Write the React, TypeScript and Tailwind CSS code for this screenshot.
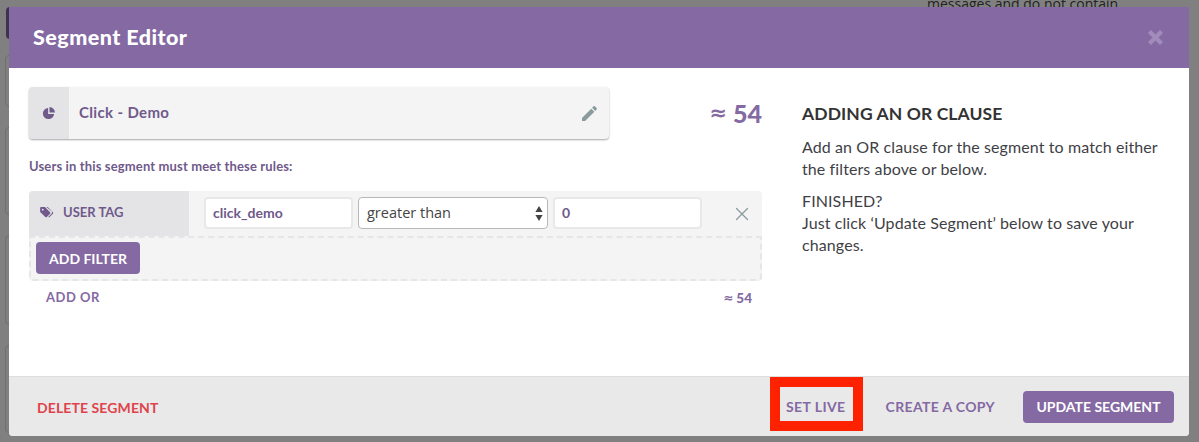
import { X } from "lucide-react";

function PieIcon() {
  return (
    <svg viewBox="0 0 16 16" className="h-[14px] w-[14px]" fill="#6f5a8b">
      <path d="M7 2.2A6.4 6.4 0 1 0 13.8 9H7z" />
      <path d="M8.6 1.2v6.2h6.2a6.2 6.2 0 0 0-6.2-6.2z" />
    </svg>
  );
}

function TagsIcon() {
  return (
    <svg viewBox="0 0 16 14" className="h-[12px] w-[14px]" fill="#6f5a8b">
      <path d="M0 1.4C0 .6.6 0 1.4 0h4.2l6 6c.5.5.5 1.3 0 1.8l-3.8 3.9c-.5.5-1.3.5-1.8 0l-6-6zM3 2a1.1 1.1 0 1 0 0 2.2A1.1 1.1 0 0 0 3 2z" />
      <path d="M7.4 0h1.5l6 6c.5.5.5 1.3 0 1.8l-3.8 3.9c-.5.5-1.2.5-1.7.1l3.9-4c.8-.8.8-1.9 0-2.7z" />
    </svg>
  );
}

function PencilIcon() {
  return (
    <svg viewBox="3 3 18 18" className="mr-[12px] h-[15px] w-[15px]" fill="#8b9a9c">
      <path d="M3 17.25V21h3.75L17.81 9.94l-3.75-3.75L3 17.25zM20.71 7.04c.39-.39.39-1.02 0-1.41l-2.34-2.34c-.39-.39-1.02-.39-1.41 0l-1.83 1.83 3.75 3.75 1.83-1.83z" />
    </svg>
  );
}

function CloseIcon() {
  return (
    <svg viewBox="0 0 15 15" className="h-[15px] w-[15px]" stroke="#a18cbb" strokeWidth={4.2}>
      <path d="M1.5 1.5l12 12M13.5 1.5l-12 12" />
    </svg>
  );
}

function SelectArrows() {
  return (
    <svg viewBox="0 0 8 15" className="h-[15px] w-[8px]" fill="#444">
      <path d="M4 0l3.6 6H.4z" />
      <path d="M4 15L.4 9h7.2z" />
    </svg>
  );
}

export default function App() {
  return (
    <div
      className="relative h-[442px] w-[1199px] overflow-hidden bg-[#808080] pl-[9px] pt-[7px]"
      style={{ fontFamily: "Lato, sans-serif" }}
    >
      {/* dimmed page behind the modal */}
      <span className="absolute left-[927px] top-[-7px] whitespace-nowrap text-[14px] text-[#222]" style={{ fontFamily: "'Open Sans', sans-serif" }}>
        messages and do not contain
      </span>
      <div className="absolute left-[6px] top-[7px] h-[32px] w-[6px] rounded-l bg-[#3c3350]" />
      <div className="absolute left-[5px] top-[55px] h-[52px] w-[6px] rounded-l border border-[#6f6f6f]" />
      <div className="absolute left-[5px] top-[127px] h-[88px] w-[6px] rounded-l border border-[#6f6f6f]" />
      <div className="absolute left-[5px] top-[235px] h-[90px] w-[6px] rounded-l border border-[#6f6f6f]" />
      <div className="absolute left-[5px] top-[345px] h-[88px] w-[6px] rounded-l border border-[#6f6f6f]" />

      <div className="relative flex h-[429px] w-[1180px] flex-col overflow-hidden rounded-b bg-white">
        <div className="flex h-[61px] items-center justify-between bg-[#8469a3] pl-[24px] pr-[26px]">
          <h1 className="text-[21.5px] font-black tracking-[0.45px] text-white">Segment Editor</h1>
          <CloseIcon />
        </div>

        <div className="flex flex-1">
          <div className="w-[753px] pl-[20px] pt-[19px]">
            <div className="flex items-center justify-between">
              <div className="flex h-[52px] w-[580px] items-center rounded bg-[#f4f4f4] shadow-[0_1px_2px_rgba(0,0,0,0.35)]">
                <div className="flex h-full w-[40px] items-center justify-center rounded-l bg-[#e4e4e7]">
                  <PieIcon />
                </div>
                <span className="ml-[10px] flex-1 pb-[1px] text-[15px] font-bold tracking-[0.35px] text-[#6f5a8b]">Click - Demo</span>
                <PencilIcon />
              </div>
              <span className="flex items-center gap-[6px] text-[25px] font-black leading-none text-[#8469a3]">
                <span className="text-[21px]" style={{ fontFamily: "'DejaVu Sans', sans-serif" }}>≈</span>
                54
              </span>
            </div>

            <p className="mt-[18px] text-[13px] font-bold tracking-[0.14px] text-[#6f5a8b]">Users in this segment must meet these rules:</p>

            <div className="mt-[14px] w-[733px] rounded bg-[#f4f4f4]">
              <div className="flex h-[45px] items-center">
                <div className="flex h-full w-[160px] items-center gap-[9px] rounded-tl bg-[#e4e4e7] pl-[11px]">
                  <TagsIcon />
                  <span className="text-[13px] font-bold text-[#6f5a8b]">USER TAG</span>
                </div>
                <div className="ml-[15px] flex h-[32px] w-[149px] items-center rounded border-2 border-[#e8e8e8] bg-white pb-[1px] pl-[7px] text-[14px] font-bold text-[#6f5a8b]">click_demo</div>
                <div className="ml-[5px] flex h-[32px] w-[190px] items-center justify-between rounded border border-[#b8b8b8] bg-white pl-[8px] pr-[4px] text-[14.5px] text-[#444]" style={{ fontFamily: "'Open Sans', sans-serif" }}>
                  <span className="-mt-[1px]">greater than</span>
                  <SelectArrows />
                </div>
                <div className="ml-[5px] flex h-[32px] w-[149px] items-center rounded border-2 border-[#e8e8e8] bg-white pb-[1px] pl-[7px] text-[14px] font-bold text-[#6f5a8b]">0</div>
                <X size={22} strokeWidth={1.4} className="ml-[29px] mt-[2px] text-[#8b9a9c]" />
              </div>
              <div className="flex h-[45px] items-center rounded-b border-2 border-dashed border-[#e6e6e6] pl-[5px]">
                <button className="h-[32px] w-[104px] rounded bg-[#8469a3] text-[14px] font-bold text-white">ADD FILTER</button>
              </div>
            </div>

            <div className="mt-[7px] flex w-[733px] items-center justify-between pl-[17px] pr-[10px]">
              <span className="text-[13px] font-bold tracking-[0.5px] text-[#8469a3]">ADD OR</span>
              <span className="flex items-center gap-[3px] text-[13.5px] font-black text-[#8469a3]">
                <span className="text-[12px]" style={{ fontFamily: "'DejaVu Sans', sans-serif" }}>≈</span>
                54
              </span>
            </div>
          </div>

          <div className="ml-[40px] w-[360px] pt-[35px] text-[16px] leading-[22px] tracking-[0.1px] text-[#3f3f46]">
            <h2 className="text-[17.5px] font-bold tracking-[0.1px] text-[#333]">ADDING AN OR CLAUSE</h2>
            <p className="mt-[11px]">Add an OR clause for the segment to match either the filters above or below.</p>
            <p className="mt-[10px]">FINISHED?</p>
            <p>Just click ‘Update Segment’ below to save your changes.</p>
          </div>
        </div>

        <div className="flex h-[60px] items-center justify-between border-t border-[#dedede] bg-[#e9e9e9] pl-[28px] pr-[15px]">
          <span className="mt-[1px] text-[14px] font-bold tracking-[0.1px] text-[#e0434b]">DELETE SEGMENT</span>
          <div className="flex items-center">
            <span className="text-[14px] font-bold tracking-[0.4px] text-[#8469a3]">SET LIVE</span>
            <span className="ml-[40px] text-[14px] font-bold tracking-[0.35px] text-[#8469a3]">CREATE A COPY</span>
            <button className="ml-[28px] h-[32px] w-[151px] rounded bg-[#8469a3] text-[14px] font-bold text-white">UPDATE SEGMENT</button>
          </div>
        </div>
      </div>

      {/* red highlight annotation */}
      <div className="absolute left-[770px] top-[377px] h-[54px] w-[93px] border-[10px] border-[#ff2200]" />
    </div>
  );
}
